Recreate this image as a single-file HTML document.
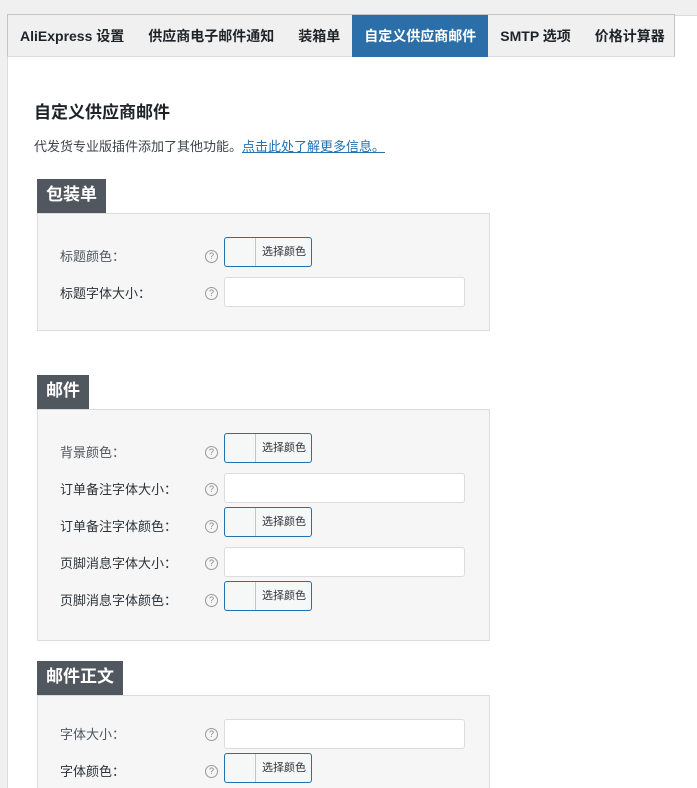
<!DOCTYPE html>
<html style="height:788px;overflow:hidden"><head><meta charset="utf-8"><style>
*{box-sizing:border-box;margin:0;padding:0}
body{width:697px;height:788px;overflow:hidden;background:#f0f0f1;font-family:"Liberation Sans","Noto Sans CJK SC",sans-serif;color:#1d2327;position:relative}
.wrap{position:absolute;left:7px;top:15px;width:700px;height:780px;background:#fff;border:1px solid #dcdcde}
.tabs{position:absolute;left:7px;top:14px;width:668px;height:43px;background:#f0f0f1;border:1px solid #c3c4c7;border-bottom:1px solid #dcdcde;display:flex}
.tab{height:42px;line-height:42px;font-size:14px;font-weight:bold;padding:0 12px;color:#1d2327;white-space:nowrap}
.tab.a{background:#2c6fa8;color:#fff}
h2{position:absolute;left:34px;top:98px;font-size:17px;font-weight:bold}
.desc{position:absolute;left:34px;top:136px;font-size:13px;color:#3c434a}
.desc a{color:#2271b1;text-decoration:underline}
.hd{position:absolute;left:37px;height:34px;background:#50575e;color:#fff;font-weight:bold;font-size:17px;line-height:32px;padding:0 9px}
.pn{position:absolute;left:37px;width:453px;background:#f6f6f6;border:1px solid #dcdcde}
.lb{position:absolute;left:60px;font-size:13px;color:#50575e}
.q{position:absolute;left:205px;width:13px;height:13px;border:1px solid #999;border-radius:50%;font-size:9px;line-height:11px;text-align:center;color:#888}
.cb{position:absolute;left:224px;width:88px;height:30px;border:1px solid #2271b1;border-radius:3px;background:#f6f7f7;font-size:11px;color:#2c3338}
.cb span{position:absolute;left:30px;top:0;bottom:0;border-left:1px solid #c3c4c7;padding-left:6px;line-height:28px}
.in{position:absolute;left:224px;width:241px;height:30px;background:#fff;border:1px solid #dcdcde;border-radius:3px}
</style></head><body>
<div class="wrap"></div>
<div class="tabs">
<div class="tab">AliExpress 设置</div><div class="tab">供应商电子邮件通知</div><div class="tab">装箱单</div><div class="tab a">自定义供应商邮件</div><div class="tab">SMTP 选项</div><div class="tab">价格计算器</div>
</div>
<h2>自定义供应商邮件</h2>
<div class="desc">代发货专业版插件添加了其他功能。<a>点击此处了解更多信息。</a></div>

<div class="hd" style="top:179px">包装单</div>
<div class="pn" style="top:213px;height:118px"></div>
<div class="lb" style="top:246px">标题颜色：</div><div class="q" style="top:250px">?</div><div class="cb" style="top:237px"><span>选择颜色</span></div>
<div class="lb" style="top:283px;color:#2c3338">标题字体大小：</div><div class="q" style="top:287px">?</div><div class="in" style="top:277px"></div>

<div class="hd" style="top:375px">邮件</div>
<div class="pn" style="top:409px;height:232px"></div>
<div class="lb" style="top:442px">背景颜色：</div><div class="q" style="top:446px">?</div><div class="cb" style="top:433px"><span>选择颜色</span></div>
<div class="lb" style="top:479px;color:#2c3338">订单备注字体大小：</div><div class="q" style="top:483px">?</div><div class="in" style="top:473px"></div>
<div class="lb" style="top:516px;color:#2c3338">订单备注字体颜色：</div><div class="q" style="top:520px">?</div><div class="cb" style="top:507px"><span>选择颜色</span></div>
<div class="lb" style="top:553px;color:#2c3338">页脚消息字体大小：</div><div class="q" style="top:557px">?</div><div class="in" style="top:547px"></div>
<div class="lb" style="top:590px;color:#2c3338">页脚消息字体颜色：</div><div class="q" style="top:594px">?</div><div class="cb" style="top:581px"><span>选择颜色</span></div>

<div class="hd" style="top:661px">邮件正文</div>
<div class="pn" style="top:695px;height:100px"></div>
<div class="lb" style="top:724px">字体大小：</div><div class="q" style="top:728px">?</div><div class="in" style="top:719px"></div>
<div class="lb" style="top:761px;color:#2c3338">字体颜色：</div><div class="q" style="top:765px">?</div><div class="cb" style="top:753px"><span>选择颜色</span></div>
</body></html>
